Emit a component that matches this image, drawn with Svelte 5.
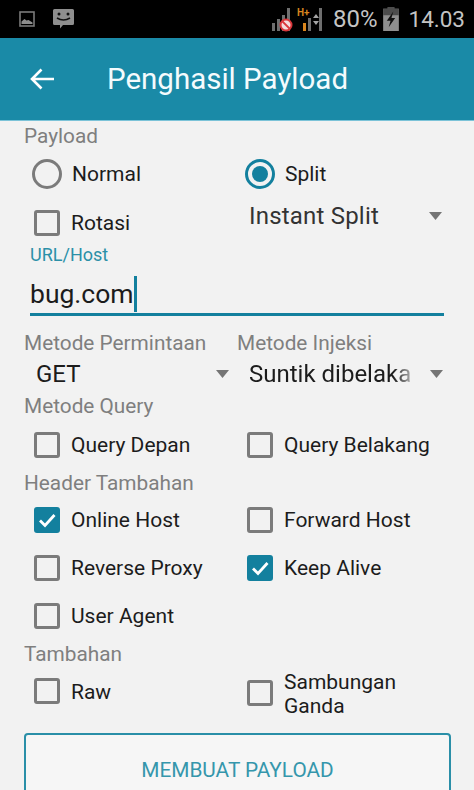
<script>
  const fade = 'Suntik dibelaka';
</script>

{#snippet box(on, text, cls = '')}
  <div class="opt {cls}">
    <span class="box" class:on>
      {#if on}
        <svg viewBox="0 0 26 26" width="26" height="26"><path d="M6 13.5l5 5L20.5 8" fill="none" stroke="#fff" stroke-width="2.8"/></svg>
      {/if}
    </span>
    <span class="txt">{text}</span>
  </div>
{/snippet}

{#snippet caret()}
  <svg class="tri" viewBox="0 0 13 8" width="13" height="8"><path d="M0 0h13L6.5 8z" fill="#757575"/></svg>
{/snippet}

<div class="screen">
  <header class="status">
    <div class="left">
      <svg width="16" height="16" viewBox="0 0 16 16"><rect x="1" y="1" width="14" height="14" fill="none" stroke="#7a7a7a" stroke-width="1.6"/><path d="M2.5 13v-2.5l3-2.5 2 1.5 2-.5 4 2.5V13z" fill="#8e8e8e"/></svg>
      <svg width="21" height="20" viewBox="0 0 21 20"><path d="M1.5 0h18A1.5 1.5 0 0 1 21 1.500v13a1.500 1.500 0 0 1-1.500 1.500H10l-3 3.500V16H1.500A1.500 1.500 0 0 1 0 14.500v-13A1.500 1.500 0 0 1 1.500 0z" fill="#8e8e8e"/><circle cx="6" cy="5" r="1.500" fill="#111"/><circle cx="15" cy="5" r="1.500" fill="#111"/><path d="M4 9q6.500 4 13 0" fill="none" stroke="#111" stroke-width="1.700"/></svg>
    </div>
    <div class="right">
      <svg class="sig" width="50" height="26" viewBox="0 0 50 26">
        <g fill="#6f6f6f"><rect x="0" y="17" width="3" height="8"/><rect x="5" y="13" width="3" height="12"/><rect x="10" y="9" width="3" height="16"/><rect x="15" y="2" width="3" height="23"/></g>
        <circle cx="14" cy="19" r="5.500" fill="#f3dcdc" stroke="#d9363a" stroke-width="2"/><path d="M10.500 15.500l7 7" stroke="#d9363a" stroke-width="1.800"/>
        <text x="25" y="10" class="hplus">H+</text>
        <g><rect x="31" y="17" width="3" height="8" fill="#d9861f"/><rect x="36" y="12" width="3" height="13" fill="#6f6f6f"/><rect x="47" y="2" width="3" height="23" fill="#6f6f6f"/></g>
        <path d="M41 12l3-4 3 4zM41 15l3 4 3-4z" fill="#a5a5a5"/>
      </svg>
      <span class="pct">80%</span>
      <svg class="bat" width="16" height="24" viewBox="0 0 17 26"><path d="M5 0h7v2h5v24H0V2h5z" fill="#8f8f8f"/><path d="M5 0h7v2h5v7H0V2h5z" fill="#4c4c4c"/><path d="M11 5L4 15h4l-2 7 7-10H9z" fill="#111"/></svg>
      <span class="time">14.03</span>
    </div>
  </header>

  <div class="appbar">
    <svg width="26" height="24" viewBox="0 0 26 24"><path d="M25 12H3M12.500 2.500L3 12l9.500 9.500" fill="none" stroke="#fff" stroke-width="2.600"/></svg>
    <h1>Penghasil Payload</h1>
  </div>

  <main>
    <div class="label first">Payload</div>
    <div class="grid radios">
      <div class="opt radio"><span class="ring"></span><span class="txt">Normal</span></div>
      <div class="opt radio"><span class="ring on"></span><span class="txt">Split</span></div>
    </div>
    <div class="grid rotasi">
      {@render box(false, 'Rotasi')}
      <div class="spin">Instant Split{@render caret()}</div>
    </div>

    <div class="field">
      <div class="flabel">URL/Host</div>
      <div class="value"><span>bug.com</span><i class="cursor"></i></div>
    </div>

    <div class="methods">
      <div class="mcol">
        <div class="label">Metode Permintaan</div>
        <div class="mspin get"><span>GET</span>{@render caret()}</div>
      </div>
      <div class="mcol two">
        <div class="label">Metode Injeksi</div>
        <div class="mspin"><span class="clip">{fade}</span>{@render caret()}</div>
      </div>
    </div>

    <div class="label query">Metode Query</div>
    <div class="grid row qrow">
      {@render box(false, 'Query Depan')}
      {@render box(false, 'Query Belakang')}
    </div>

    <div class="label header">Header Tambahan</div>
    <div class="grid row">
      {@render box(true, 'Online Host')}
      {@render box(false, 'Forward Host')}
    </div>
    <div class="grid row">
      {@render box(false, 'Reverse Proxy')}
      {@render box(true, 'Keep Alive')}
    </div>
    <div class="grid row">
      {@render box(false, 'User Agent')}
    </div>

    <div class="label extra">Tambahan</div>
    <div class="grid last">
      {@render box(false, 'Raw', 'raw')}
      {@render box(false, 'Sambungan Ganda', 'wrap')}
    </div>

    <button class="make">MEMBUAT PAYLOAD</button>
  </main>
</div>

<style>
  :global(body) { margin: 0; background: #f2f2f2; }
  .screen { width: 474px; height: 790px; overflow: hidden; background: #f2f2f2; font-family: Roboto, "Liberation Sans", sans-serif; color: #1c1c1c; }
  .status { height: 38px; background: #000; display: flex; justify-content: space-between; align-items: center; box-sizing: border-box; padding: 0 9px 0 19px; }
  .left { display: flex; align-items: center; gap: 18px; }
  .right { display: flex; align-items: center; color: #c4c4c4; font-size: 24px; }
  .sig { margin-right: 11px; }
  .hplus { font-size: 10px; font-weight: 700; fill: #d9861f; font-family: Roboto, sans-serif; }
  .pct { margin-right: 6px; }
  .bat { margin-right: 9px; }
  .time { font-size: 22.500px; }
  .appbar { height: 82px; background: #1a8aa7; border-bottom: 1px solid #7cc3d8; display: flex; align-items: center; padding-left: 29px; color: #fff; }
  h1 { margin: 0 0 0 52px; font-size: 29.500px; font-weight: 400; color: #f4fbfd; }
  main { padding: 0 24px; }
  .label { color: #7f7f7f; font-size: 20.800px; line-height: 24px; }
  .first { margin-top: 3px; }
  .grid { display: grid; grid-template-columns: 213px 1fr; padding-left: 10px; }
  .radios { height: 48px; margin-top: 2px; align-items: center; margin-left: -2px; }
  .opt { display: flex; align-items: center; min-width: 0; }
  .txt { font-size: 21px; color: #1c1c1c; margin-left: 11px; line-height: 24px; }
  .radio .txt { margin-left: 10px; }
  .ring { width: 30px; height: 30px; box-sizing: border-box; border: 3px solid #7b7b7b; border-radius: 50%; flex: none; position: relative; }
  .ring.on { border-color: #13809e; }
  .ring.on::after { content: ""; position: absolute; inset: 4px; border-radius: 50%; background: #13809e; }
  .box { width: 26px; height: 26px; box-sizing: border-box; border: 3px solid #7b7b7b; border-radius: 3px; flex: none; position: relative; }
  .box.on { background: #13809e; border-color: #13809e; }
  .box svg { position: absolute; left: -3px; top: -3px; }
  .rotasi { height: 45px; align-items: center; }
  .rotasi .opt { margin-top: 4px; }
  .rotasi .box { margin-top: 1px; }
  .spin { font-size: 24px; letter-spacing: .2px; display: flex; justify-content: space-between; align-items: center; margin: 0 0 10px 2px; padding-right: 8px; color: #333; }
  .tri { flex: none; }
  .field { margin: -8px 6px 0; border-bottom: 3px solid #13809e; height: 81px; box-sizing: border-box; }
  .flabel { font-size: 18px; color: #2b90a8; line-height: 20px; padding-top: 10px; }
  .value { font-size: 26.500px; line-height: 36px; height: 36px; margin-top: 11px; color: #1c1c1c; display: flex; }
  .cursor { width: 3px; height: 36px; background: #13809e; margin-left: 0; }
  .methods { display: flex; margin-top: 15px; }
  .mcol { width: 213px; flex: none; }
  .mcol.two { width: 214px; }
  .mspin { display: flex; justify-content: space-between; align-items: center; font-size: 24px; height: 38px; padding-right: 8px; }
  .get { padding-left: 12px; padding-right: 0; width: 205px; box-sizing: border-box; }
  .mcol.two .mspin { padding-left: 12px; }
  .clip { width: 164px; white-space: nowrap; -webkit-mask-image: linear-gradient(90deg, #000 88%, rgba(0,0,0,.25)); mask-image: linear-gradient(90deg, #000 88%, rgba(0,0,0,.25)); }
  .query { margin-top: 1px; }
  .row { height: 48px; align-items: center; }
  .qrow { height: 52px; padding-top: 2px; box-sizing: border-box; }
  .header { margin-top: 1px; margin-bottom: -2px; }
  .header + .row { margin-top: 3px; }
  .extra { margin-top: 2px; }
  .last { height: 50px; margin-top: 0; align-items: center; }
  .raw .box { margin-top: -2px; }
  .wrap { margin-top: 4px; }
  .wrap .box { margin-top: -2px; }
  .wrap .txt { width: 130px; }
  .make { display: block; width: 427px; height: 80px; margin-top: 17px; background: #f6f6f6; border: 2px solid #2a8fa8; border-radius: 4px; color: #3596ac; font: 400 20.800px Roboto, sans-serif; padding: 0 0 6px; }
</style>
